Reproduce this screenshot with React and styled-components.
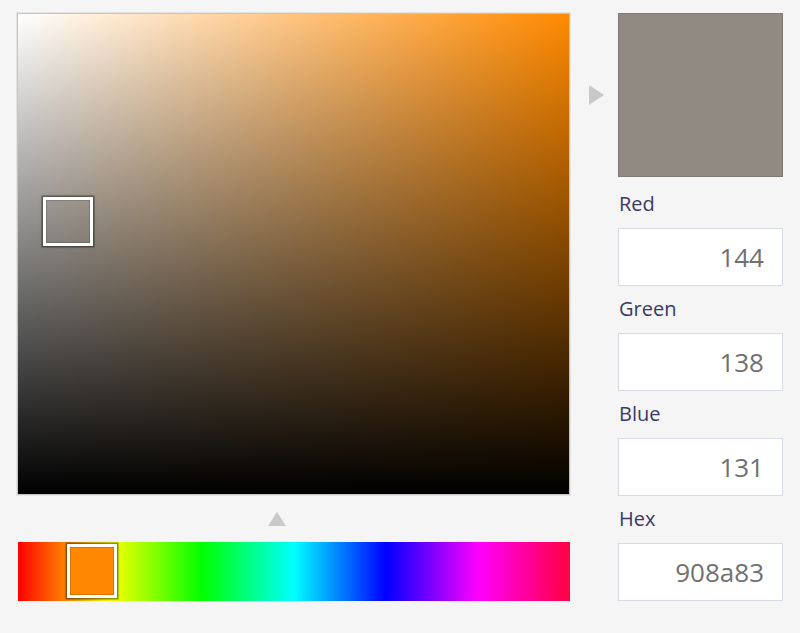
import styled, { createGlobalStyle } from "styled-components";

const Global = createGlobalStyle`
  body {
    margin: 0;
    background: #f5f5f5;
    font-family: "Open Sans", "Noto Sans", Arial, sans-serif;
  }
`;

const Picker = styled.div`
  display: flex;
  padding: 13px 17px;
`;

const LeftColumn = styled.div`
  display: flex;
  flex-direction: column;
  width: 553px;
`;

const SatValArea = styled.div`
  position: relative;
  box-sizing: border-box;
  height: 482px;
  border: 1px solid #c4c4c4;
  box-shadow: 0 0 0 1px #e4e4e4;
  background:
    linear-gradient(to bottom, rgba(0, 0, 0, 0), #000),
    linear-gradient(to right, #fff, #ff8a00);
`;

const Handle = styled.div`
  position: absolute;
  box-sizing: border-box;
  left: ${(p) => p.x}px;
  top: ${(p) => p.y}px;
  width: ${(p) => p.w}px;
  height: ${(p) => p.h}px;
  border: 3px solid #fff;
  background: ${(p) => p.fill || "transparent"};
  box-shadow: 0 0 0 1.5px rgba(0, 0, 0, 0.35), 0 0 3px 1px rgba(0, 0, 0, 0.2),
    inset 0 0 0 1px rgba(0, 0, 0, 0.15);
`;

const MarkerRow = styled.div`
  height: 47px;
  display: flex;
  justify-content: center;
  align-items: center;
  padding-right: 33px;
`;

const UpTriangle = styled.div`
  width: 0;
  height: 0;
  border-left: 9px solid transparent;
  border-right: 9px solid transparent;
  border-bottom: 14px solid #c9c9c9;
`;

const HueBar = styled.div`
  position: relative;
  height: 59px;
  margin-left: 1px;
  background: linear-gradient(
    to right,
    #ff0000 0%,
    #ffff00 16.67%,
    #00ff00 33.33%,
    #00ffff 50%,
    #0000ff 66.67%,
    #ff00ff 83.33%,
    #ff0040 100%
  );
`;

const ArrowColumn = styled.div`
  width: 48px;
  height: 164px;
  display: flex;
  align-items: center;
  justify-content: center;
`;

const RightTriangle = styled.div`
  width: 0;
  height: 0;
  border-top: 10px solid transparent;
  border-bottom: 10px solid transparent;
  border-left: 15px solid #c9c9c9;
  margin-left: 4px;
`;

const RightColumn = styled.div`
  display: flex;
  flex-direction: column;
  width: 165px;
`;

const Preview = styled.div`
  box-sizing: border-box;
  height: 164px;
  background: ${(p) => p.color};
  border: 1px solid #7f7a74;
`;

const Label = styled.div`
  height: 28px;
  line-height: 28px;
  margin: ${(p) => (p.first ? "13px" : "9px")} 0 10px 1px;
  font-size: 20px;
  color: #3a3a66;
`;

const Field = styled.div`
  box-sizing: border-box;
  height: 58px;
  background: #fff;
  border: 1px solid #d6dbe4;
  display: flex;
  align-items: center;
  justify-content: flex-end;
  padding-right: 18px;
  font-size: 26px;
  color: #707070;
`;

const fields = [
  ["Red", "144"],
  ["Green", "138"],
  ["Blue", "131"],
  ["Hex", "908a83"],
];

export default function App() {
  return (
    <>
      <Global />
      <Picker>
        <LeftColumn>
          <SatValArea>
            <Handle x={25} y={183} w={50} h={49} />
          </SatValArea>
          <MarkerRow>
            <UpTriangle />
          </MarkerRow>
          <HueBar>
            <Handle x={49} y={2} w={50} h={54} fill="#ff8800" />
          </HueBar>
        </LeftColumn>
        <ArrowColumn>
          <RightTriangle />
        </ArrowColumn>
        <RightColumn>
          <Preview color="#908a83" />
          {fields.map(([label, value], i) => (
            <div key={label}>
              <Label first={i === 0}>{label}</Label>
              <Field>{value}</Field>
            </div>
          ))}
        </RightColumn>
      </Picker>
    </>
  );
}
